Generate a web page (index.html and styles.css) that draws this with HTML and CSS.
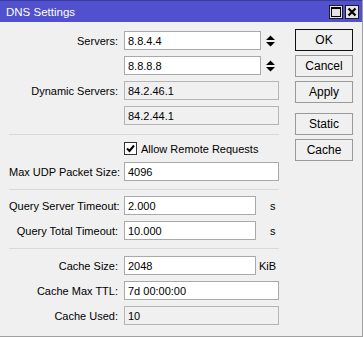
FILE: index.html
```html
<!DOCTYPE html>
<html lang="en">
  <head>
    <meta charset="UTF-8" />
    <title>DNS Settings</title>
    <link rel="stylesheet" href="styles.css">
  </head>
  <body>
    <div class="window">
      <div class="titlebar">
        <span class="title">DNS Settings</span>
        <div class="title-buttons">
          <span class="tbtn">
            <svg width="12" height="12" viewBox="0 0 12 12"><rect x="1.5" y="1.5" width="9" height="9" fill="none" stroke="#000" stroke-width="1"/><path d="M1 2h10" stroke="#000" stroke-width="2"/></svg>
          </span>
          <span class="tbtn">
            <svg width="12" height="12" viewBox="0 0 12 12"><path d="M2.5 2.5l7 7M9.5 2.5l-7 7" stroke="#000" stroke-width="2.2"/></svg>
          </span>
        </div>
      </div>

      <div class="content">
        <div class="form">
          <div class="section first">
            <div class="row">
              <label>Servers:</label>
              <div class="field">
                <input class="input server" type="text" value="8.8.4.4">
                <svg class="spin" width="9" height="12" viewBox="0 0 9 12"><path d="M0 5L4.5 0.5L9 5z M0 7L9 7L4.5 11.5z" fill="#000"/></svg>
              </div>
            </div>
            <div class="row">
              <label></label>
              <div class="field">
                <input class="input server" type="text" value="8.8.8.8">
                <svg class="spin" width="9" height="12" viewBox="0 0 9 12"><path d="M0 5L4.5 0.5L9 5z M0 7L9 7L4.5 11.5z" fill="#000"/></svg>
              </div>
            </div>
            <div class="row">
              <label>Dynamic Servers:</label>
              <div class="field"><div class="input readonly">84.2.46.1</div></div>
            </div>
            <div class="row">
              <label></label>
              <div class="field"><div class="input readonly">84.2.44.1</div></div>
            </div>
          </div>

          <div class="section second">
            <div class="row check-row">
              <label></label>
              <div class="field">
                <span class="checkbox">
                  <svg width="11" height="11" viewBox="0 0 11 11"><path d="M2 5.5l2.5 2.5L9 2.5" fill="none" stroke="#000" stroke-width="2"/></svg>
                </span>
                <span class="check-label">Allow Remote Requests</span>
              </div>
            </div>
            <div class="row">
              <label>Max UDP Packet Size:</label>
              <div class="field"><input class="input" type="text" value="4096"></div>
            </div>
          </div>

          <div class="section third">
            <div class="row">
              <label>Query Server Timeout:</label>
              <div class="field"><input class="input short" type="text" value="2.000"><span class="unit">s</span></div>
            </div>
            <div class="row">
              <label>Query Total Timeout:</label>
              <div class="field"><input class="input short" type="text" value="10.000"><span class="unit">s</span></div>
            </div>
          </div>

          <div class="section last">
            <div class="row">
              <label>Cache Size:</label>
              <div class="field"><input class="input short" type="text" value="2048"><span class="unit kib">KiB</span></div>
            </div>
            <div class="row">
              <label>Cache Max TTL:</label>
              <div class="field"><input class="input" type="text" value="7d 00:00:00"></div>
            </div>
            <div class="row">
              <label>Cache Used:</label>
              <div class="field"><div class="input readonly">10</div></div>
            </div>
          </div>
        </div>

        <div class="buttons">
          <button class="btn default">OK</button>
          <button class="btn">Cancel</button>
          <button class="btn">Apply</button>
          <button class="btn spaced">Static</button>
          <button class="btn">Cache</button>
        </div>
      </div>
    </div>
  </body>
</html>
```

FILE: styles.css
```css
* {
  box-sizing: border-box;
}

html,
body {
  margin: 0;
  padding: 0;
  background-color: #ffffff;
}

body {
  font-family: "Liberation Sans", Arial, sans-serif;
  font-size: 11px;
  color: #000;
}

.window {
  width: 363px;
  height: 337px;
  background-color: #f0f0f0;
  border-right: 1px solid #a0a0a0;
  border-bottom: 1px solid #a0a0a0;
  display: flex;
  flex-direction: column;
}

.titlebar {
  height: 22px;
  background-color: #5151cf;
  border-top: 1px solid #3a3a9a;
  display: flex;
  align-items: center;
  justify-content: space-between;
  padding: 0 3px 0 6px;
}

.title {
  color: #fff;
  font-size: 11.5px;
  padding-top: 1px;
}

.title-buttons {
  display: flex;
  gap: 2px;
}

.tbtn {
  width: 14px;
  height: 14px;
  background-color: #e4e4e4;
  border: 1px solid #1e1e1e;
  display: flex;
  align-items: center;
  justify-content: center;
}

.content {
  display: flex;
  flex: 1;
}

.form {
  width: 279px;
  padding-left: 9px;
}

.section {
  display: flex;
  flex-direction: column;
  gap: 6px;
  border-bottom: 1px solid #d9d9d9;
}

.section.first {
  padding: 9px 0 9px;
}

.section.second {
  padding: 6px 0 8px;
}

.section.third {
  padding: 6px 0 8px;
}

.section.last {
  padding: 7px 0 0;
  border-bottom: none;
}

.row {
  display: grid;
  grid-template-columns: 109px 155px;
  column-gap: 6px;
  align-items: center;
  height: 19px;
}

.row.check-row {
  height: 15px;
}

.row label {
  text-align: right;
  white-space: nowrap;
}

.field {
  display: flex;
  align-items: center;
  height: 100%;
}

.input {
  width: 155px;
  height: 19px;
  border: 1px solid #a9a9a9;
  background-color: #fff;
  font-family: inherit;
  font-size: 11px;
  color: #000;
  padding: 0 3px;
  margin: 0;
  outline: none;
  display: flex;
  align-items: center;
}

.input.server {
  width: 137px;
}

.input.short {
  width: 132px;
}

.input.readonly {
  background-color: #f0f0f0;
  border-color: #b5b5b5;
}

.spin {
  margin-left: 5px;
}

.unit {
  margin-left: 14px;
}

.unit.kib {
  margin-left: 3px;
}

.checkbox {
  width: 13px;
  height: 13px;
  border: 1px solid #333;
  background-color: #fff;
  display: flex;
  align-items: center;
  justify-content: center;
}

.check-label {
  margin-left: 4px;
}

.buttons {
  display: flex;
  flex-direction: column;
  gap: 4px;
  padding-top: 7px;
  margin-left: 16px;
}

.btn {
  width: 58px;
  height: 22px;
  background-color: #f0f0f0;
  border: 1px solid #9a9a9a;
  font-family: inherit;
  font-size: 12px;
  color: #000;
  padding: 0;
}

.btn.default {
  border-color: #111;
}

.btn.spaced {
  margin-top: 6px;
}
```
